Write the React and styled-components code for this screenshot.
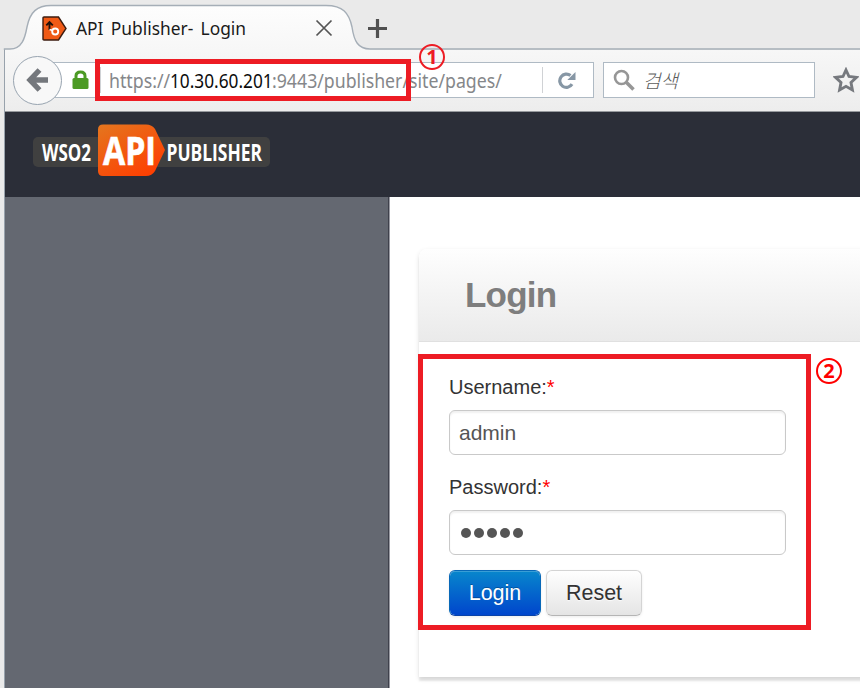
import React from "react";
import styled, { createGlobalStyle } from "styled-components";

const ui = `"Noto Sans", "Open Sans", "Noto Sans CJK KR", sans-serif`;
const body = `"Liberation Sans", Arial, sans-serif`;

const Global = createGlobalStyle`
  * { box-sizing: border-box; }
  body { margin: 0; background: #eaeaea; overflow: hidden; }
`;

const Window = styled.div`
  position: relative;
  width: 860px;
  height: 688px;
  overflow: hidden;
  display: flex;
  flex-direction: column;
  background: #eaeaea;
`;

const TabStrip = styled.div`
  position: relative;
  height: 50px;
  flex: none;
  display: flex;
  align-items: center;
  padding: 6px 0 0 42px;
`;

const TabOutline = styled.svg`
  position: absolute;
  left: 0;
  top: 0;
`;

const Favicon = styled.svg`
  position: relative;
  width: 25px;
  height: 25px;
  flex: none;
`;

const TabTitle = styled.div`
  position: relative;
  width: 239px;
  padding-left: 9px;
  font: 18.5px/26px ${ui};
  color: #1b1b1b;
  white-space: nowrap;
`;

const TitleText = styled.span`
  display: inline-block;
  transform: scaleX(0.938);
  transform-origin: left;
  word-spacing: 3px;
`;

const TabGlyph = styled.svg`
  position: relative;
  flex: none;
  margin-left: ${(p) => p.$gap || 0}px;
`;

const Frame = styled.div`
  flex: 1;
  margin-left: 4px;
  border-left: 1px solid #98a2ac;
  display: flex;
  flex-direction: column;
`;

const Toolbar = styled.div`
  height: 62px;
  flex: none;
  display: flex;
  align-items: center;
  padding: 0 0 1px 8px;
  background: linear-gradient(#f7f7f7, #ededed);
  border-bottom: 1px solid #96999d;
`;

const BackButton = styled.div`
  position: relative;
  z-index: 1;
  width: 49px;
  height: 49px;
  flex: none;
  border: 1px solid #98a4b0;
  border-radius: 50%;
  background: #f8f8f8;
  display: flex;
  align-items: center;
  justify-content: center;
`;

const UrlBar = styled.div`
  width: 546px;
  height: 36px;
  margin-left: -14px;
  flex: none;
  display: flex;
  align-items: center;
  background: #fff;
  border: 1px solid #afbac4;
  padding-left: 23px;
`;

const Separator = styled.div`
  width: 1px;
  height: 26px;
  background: #d0d2d5;
  margin-left: ${(p) => p.$gap}px;
`;

const Url = styled.div`
  display: flex;
  width: 434px;
  padding: 2px 0 0 8px;
  font: 19.5px/28px ${ui};
  color: #85878a;
  white-space: nowrap;
`;

const UrlPart = styled.span`
  width: ${(p) => p.$w}px;
  color: ${(p) => (p.$host ? "#0c0c0c" : "inherit")};
`;

const Squeeze = styled.span`
  display: inline-block;
  transform: scaleX(${(p) => p.$x});
  transform-origin: left;
`;

const SearchBox = styled.div`
  width: 212px;
  height: 36px;
  margin-left: 9px;
  flex: none;
  display: flex;
  align-items: center;
  background: #fff;
  border: 1px solid #afbac4;
  padding-left: 9px;
`;

const SearchHint = styled.span`
  margin-left: 7px;
  font: italic 300 19px/28px "Noto Sans CJK KR", sans-serif;
  color: #5d5d5d;
`;

const Star = styled.svg`
  margin-left: 18px;
  flex: none;
`;

const AppHeader = styled.header`
  height: 85px;
  flex: none;
  background: #2b2e38;
  padding: 12px 0 0 28px;
`;

const LogoMark = styled.svg`
  display: block;
  overflow: visible;
`;

const Page = styled.div`
  flex: 1;
  display: flex;
  background: #fff;
`;

const Sidebar = styled.aside`
  width: 385px;
  flex: none;
  background: #646871;
  border-right: 1px solid #9a9ba3;
  box-shadow: inset -1px 0 #3f414c;
`;

const Main = styled.main`
  flex: 1;
  padding: 52px 0 0 29px;
`;

const Panel = styled.section`
  width: 520px;
  height: 428px;
  background: #fff;
  border-radius: 8px 8px 0 0;
  box-shadow: 0 2px 5px rgba(0, 0, 0, 0.12), 0 4px 2px rgba(0, 0, 0, 0.07);
`;

const PanelHeader = styled.div`
  height: 93px;
  border-radius: 8px 8px 0 0;
  border-bottom: 1px solid #e0e0e0;
  background: linear-gradient(#fefefe, #eaeaea);
  padding: 22px 0 0 46px;
`;

const Heading = styled.h2`
  margin: 0;
  font: bold 35px/48px ${body};
  letter-spacing: -0.8px;
  color: #7e7e7e;
`;

const Form = styled.div`
  display: flex;
  flex-direction: column;
  padding: 31px 0 0 30px;
`;

const Label = styled.label`
  height: 28px;
  margin-bottom: 9px;
  font: 20px/28px ${body};
  color: #333;
`;

const Required = styled.span`
  color: #f00;
`;

const Field = styled.div`
  width: 337px;
  height: 45px;
  margin-bottom: 17.5px;
  display: flex;
  align-items: center;
  padding-left: 9px;
  border: 1px solid #c9c9c9;
  border-radius: 6px;
  box-shadow: inset 0 2px 2px rgba(0, 0, 0, 0.06);
  font: 21px/28px ${body};
  color: #555;
`;

const Dots = styled.div`
  display: flex;
  gap: 3px;
  padding: 1px 0 0 2px;
`;

const Dot = styled.i`
  width: 10px;
  height: 10px;
  border-radius: 50%;
  background: #555;
`;

const Actions = styled.div`
  display: flex;
  gap: 5px;
  margin-top: -2px;
`;

const Button = styled.button`
  width: ${(p) => p.$w}px;
  height: 46px;
  padding: 0;
  border-radius: 6px;
  font: 21.5px/28px ${body};
  color: ${(p) => (p.$primary ? "#fff" : "#333")};
  border: 1px solid ${(p) => (p.$primary ? "#0868b8" : "#d4d4d4")};
  border-bottom-color: ${(p) => (p.$primary ? "#0a43a8" : "#b5b5b5")};
  background: ${(p) =>
    p.$primary ? "linear-gradient(#0888cc, #0044cc)" : "linear-gradient(#fff, #e4e4e4)"};
  background-clip: padding-box;
  background-origin: border-box;
  box-shadow: inset 0 1px 0 rgba(255, 255, 255, 0.2), 0 1px 3px rgba(0, 0, 0, 0.08);
  text-shadow: ${(p) => (p.$primary ? "0 -1px 0 rgba(0,0,0,.25)" : "0 1px 1px rgba(255,255,255,.75)")};
`;

const Highlight = styled.div`
  position: absolute;
  left: ${(p) => p.$x}px;
  top: ${(p) => p.$y}px;
  width: ${(p) => p.$w}px;
  height: ${(p) => p.$h}px;
  border: 5px solid #ed1c24;
  z-index: 2;
`;

const Marker = styled.div`
  position: absolute;
  left: ${(p) => p.$x}px;
  top: ${(p) => p.$y}px;
  width: 26px;
  height: 26px;
  border: 2px solid ${(p) => p.$color};
  border-radius: 50%;
  display: flex;
  align-items: center;
  justify-content: center;
  font: bold 20px/20px ${ui};
  color: ${(p) => p.$color};
  z-index: 3;
`;

function Logo() {
  const text = {
    fill: "#fff",
    fontFamily: "Open Sans, Noto Sans, sans-serif",
    fontWeight: 700,
    lengthAdjust: "spacingAndGlyphs",
  };
  return (
    <LogoMark width="238" height="53" viewBox="0 0 238 53" role="img">
      <defs>
        <linearGradient id="orange" x1="0" y1="0" x2="0.7" y2="1">
          <stop offset="0" stopColor="#e4761f" />
          <stop offset="1" stopColor="#fd4002" />
        </linearGradient>
      </defs>
      <rect x="0" y="13" width="237" height="30" rx="5" fill="#404040" />
      <path
        d="M70 .5 H113 Q119 .5 122 5 L132 26 L122 47 Q119 52 113 52 H70 Q65 52 65 47 V5.500 Q65 .5 70 .5Z"
        fill="url(#orange)"
      />
      <text {...text} x="9" y="36.700" fontSize="23" textLength="49">WSO2</text>
      <text {...text} x="70" y="41" fontSize="39.500" textLength="53" stroke="#fff" strokeWidth=".7">API</text>
      <text {...text} x="133.500" y="36.700" fontSize="23" textLength="95.500">PUBLISHER</text>
    </LogoMark>
  );
}

export default function App() {
  return (
    <>
      <Global />
      <Window>
        <TabStrip>
          <TabOutline width="860" height="50">
            <defs>
              <linearGradient id="tab" x1="0" y1="0" x2="0" y2="1">
                <stop offset="0" stopColor="#fdfdfd" />
                <stop offset="1" stopColor="#f7f7f7" />
              </linearGradient>
            </defs>
            <path
              d="M4.500 50 V49 H10 C22 49 25 38 27 27 C30 12 37 5.500 51 5.500 H326 C343 5.500 349 13 352 27 C354 41 358 49 370 49 V50 Z"
              fill="url(#tab)"
            />
            <path
              d="M4.500 50 V49 H10 C22 49 25 38 27 27 C30 12 37 5.500 51 5.500 H326 C343 5.500 349 13 352 27 C354 41 358 49 370 49 H860"
              fill="none"
              stroke="#a5aeb7"
              strokeWidth="1.400"
            />
          </TabOutline>
          <Favicon viewBox="0 0 25 25">
            <path d="M2 1 H16.500 L24 12.500 L16.500 24 H2 Q1 24 1 23 V2 Q1 1 2 1Z" fill="#f05a16" stroke="#3c1c10" strokeWidth="1.400" />
            <path d="M7.500 14 V7 M4.300 9.300 L7.500 6 L10.800 9.300" fill="none" stroke="#20100a" strokeWidth="1.900" />
            <circle cx="13.200" cy="15.500" r="3" fill="none" stroke="#fff" strokeWidth="1.900" />
            <path d="M7.500 13.500 L10.800 14.500" stroke="#fff" strokeWidth="1.500" />
          </Favicon>
          <TabTitle>
            <TitleText>API Publisher- Login</TitleText>
          </TabTitle>
          <TabGlyph $gap={9} width="18" height="18" viewBox="0 0 18 18">
            <path d="M1.500 1.500 L16.500 16.500 M16.500 1.500 L1.500 16.500" stroke="#555" strokeWidth="1.700" />
          </TabGlyph>
          <TabGlyph $gap={35} width="19" height="19" viewBox="0 0 19 19">
            <path d="M9.500 0 V19 M0 9.500 H19" stroke="#505050" strokeWidth="3.200" />
          </TabGlyph>
        </TabStrip>
        <Frame>
          <Toolbar>
            <BackButton>
              <svg width="24" height="26" viewBox="0 0 24 26">
                <path d="M13.500 3 L4 13 L13.500 23 M5 13 H22" fill="none" stroke="#74777c" strokeWidth="5.400" />
              </svg>
            </BackButton>
            <UrlBar>
              <svg width="17" height="20" viewBox="0 0 17 20">
                <path d="M4 9 V6 Q4 2 8.500 2 Q13 2 13 6 V9" fill="none" stroke="#4c9a24" strokeWidth="3" />
                <rect x=".5" y="8" width="16" height="11" rx="1.500" fill="#4c9a24" />
              </svg>
              <Separator $gap={11} />
              <Url>
                <UrlPart $w={61}><Squeeze $x={0.91}>https://</Squeeze></UrlPart>
                <UrlPart $w={102} $host><Squeeze $x={0.885}>10.30.60.201</Squeeze></UrlPart>
                <UrlPart><Squeeze $x={0.908}>:9443/publisher/site/pages/</Squeeze></UrlPart>
              </Url>
              <Separator $gap={7} />
              <TabGlyph $gap={15} width="18" height="19" viewBox="0 0 18 19">
                <path d="M14 13.200 A6.600 6.600 0 1 1 12.500 4.600" fill="none" stroke="#8797a5" strokeWidth="3.200" />
                <path d="M17.500 1 V9 H9.300 Z" fill="#8797a5" />
              </TabGlyph>
            </UrlBar>
            <SearchBox>
              <svg width="23" height="23" viewBox="0 0 23 23">
                <circle cx="8.500" cy="8.500" r="6.500" fill="none" stroke="#969696" strokeWidth="2.600" />
                <path d="M13 13 L20.500 20.500" stroke="#969696" strokeWidth="3.500" />
              </svg>
              <SearchHint>검색</SearchHint>
            </SearchBox>
            <Star width="26" height="26" viewBox="0 0 26 26">
              <path
                d="M13 3 L16 9.500 L23.500 10.400 L18 15.500 L19.400 23 L13 19.300 L6.600 23 L8 15.500 L2.500 10.400 L10 9.500 Z"
                fill="none"
                stroke="#76797e"
                strokeWidth="2.900"
              />
            </Star>
          </Toolbar>
          <AppHeader>
            <Logo />
          </AppHeader>
          <Page>
            <Sidebar />
            <Main>
              <Panel>
                <PanelHeader>
                  <Heading>Login</Heading>
                </PanelHeader>
                <Form>
                  <Label>Username:<Required>*</Required></Label>
                  <Field>admin</Field>
                  <Label>Password:<Required>*</Required></Label>
                  <Field>
                    <Dots>
                      <Dot /><Dot /><Dot /><Dot /><Dot />
                    </Dots>
                  </Field>
                  <Actions>
                    <Button $primary $w={92}>Login</Button>
                    <Button $w={96}>Reset</Button>
                  </Actions>
                </Form>
              </Panel>
            </Main>
          </Page>
        </Frame>
        <Highlight $x={95} $y={59} $w={316} $h={42} />
        <Marker $x={419} $y={44} $color="#ed1c24">1</Marker>
        <Highlight $x={418} $y={354} $w={393} $h={276} />
        <Marker $x={816} $y={358} $color="#ff0000">2</Marker>
      </Window>
    </>
  );
}
